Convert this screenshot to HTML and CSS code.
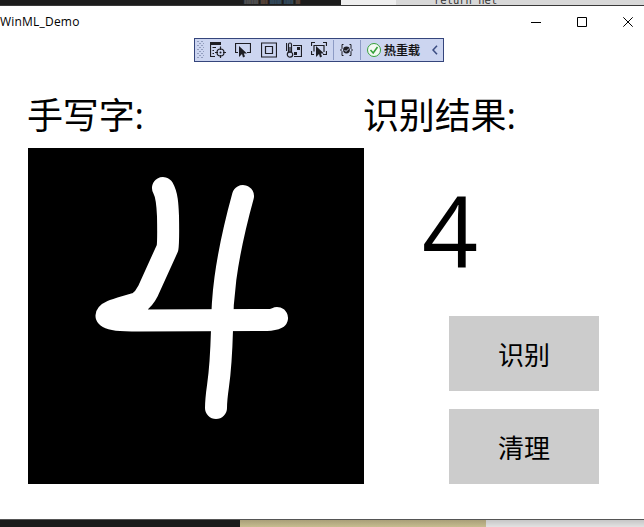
FILE: index.html
```html
<!DOCTYPE html>
<html lang="zh-CN">
<head>
<meta charset="utf-8">
<title>WinML_Demo</title>
<link rel="stylesheet" href="styles.css">
</head>
<body>
<div class="desktop">
  <div class="backdrop-top">
    <div class="back-dark"><span class="blur-code"><i>▒▒▒▒▒▒</i><b>▒▒▒</b><em>▒▒▒▒▒</em><em>▒▒▒▒</em><b>▒▒</b></span></div>
    <div class="back-light"><span class="back-text">return net</span></div>
  </div>
  <main class="window">
    <header class="titlebar">
      <span class="title">WinML_Demo</span>
      <div class="caption">
        <svg width="10" height="10" viewBox="0 0 10 10"><path d="M0 5.5H10"/></svg>
        <svg width="10" height="10" viewBox="0 0 10 10"><path d="M.5 .5H9.5V9.5H.5Z"/></svg>
        <svg width="10" height="10" viewBox="0 0 10 10"><path d="M.3 .3L9.7 9.7M9.7 .3L.3 9.7"/></svg>
      </div>
    </header>
    <div class="toolbar">
      <svg class="grip" width="7" height="18" viewBox="0 0 7 18"><path d="M0 .5H7M0 4.5H7M0 8.5H7M0 12.5H7M0 16.5H7" stroke-dasharray="2 2"/><path d="M2 2.5H7M2 6.5H7M2 10.5H7M2 14.5H7" stroke-dasharray="2 2"/></svg>
      <svg class="tool t1" width="16" height="16" viewBox="0 0 16 16"><path d="M0 1.5H11" stroke-width="3"/><path d="M.5 1V14.5H5M2.500 5.500H6M2.500 8.500H4M2.500 11.500H4M10.500 4.500V8M10.500 13V16M5 10.500H8M13 10.500H16"/><circle cx="10.500" cy="10.500" r="3.500"/><circle class="solid" cx="10.500" cy="10.500" r="1"/></svg>
      <svg class="tool t2" width="16" height="16" viewBox="0 0 16 16"><path d="M3 10.500H.5V1.500H15.500V10.500H12"/><path class="solid" d="M4 4V15L7 12L8 15.500L10 14.500L8.800 11.500H12Z"/></svg>
      <svg class="tool t3" width="16" height="16" viewBox="0 0 16 16"><path d="M.5 1H15.500V15H.5ZM4.500 4.500H11.500V11.500H4.500Z"/></svg>
      <svg class="tool t4" width="16" height="16" viewBox="0 0 16 16"><path d="M2.500 10V2.500Q2.500 1 4 1Q5.500 1 5.500 2.500V10M.5 1V9M7 3.500H15.500V14.500H8"/><path d="M4 5V11"/><circle cx="4" cy="12.500" r="2.700"/><path class="solid" d="M11 5H14V8H11ZM8 10H11V13H8Z"/></svg>
      <svg class="tool t5" width="16" height="16" viewBox="0 0 16 16"><path d="M.5 4V.5H4M12 .5H15.500V4M.5 9V12.500H3M12 12.500H15.500V9M3 9.500V3.500H13V10"/><path class="solid" d="M5 4V15L8 12L9 15.500L11 14.500L9.800 11.500H13Z"/></svg>
      <span class="divider d1"></span>
      <svg class="tool t6" width="13" height="12" viewBox="0 0 13 12"><path d="M3.500 .5H2V4.500L.5 6L2 7.500V11.500H3.500M9.500 .5H11V4.500L12.500 6L11 7.500V11.500H9.500"/><circle class="solid" cx="6.500" cy="6" r="3.400"/><path class="tick" d="M4.500 6L6 7.500L9 4.500"/></svg>
      <span class="divider d2"></span>
      <svg class="ok" width="14" height="14" viewBox="0 0 14 14"><circle cx="7" cy="7" r="6.500"/><path d="M3.500 7L6.200 10L10.500 4"/></svg>
      <span class="reload">热重载</span>
      <svg class="chev" width="6" height="10" viewBox="0 0 6 10"><path d="M5 .8L1 5L5 9.200"/></svg>
    </div>
    <div class="content">
      <section class="input">
        <h1>手写字:</h1>
        <svg class="ink" width="336" height="336" viewBox="28 148 336 336">
          <path d="M163 188C167 195 167.500 204 168 216Q168.500 242 167.500 248L148 291Q144 299 138 303C119 309 107 311 106.500 316C108 320 122 320.500 139 320.500L267 320Q273 320 277 318"/>
          <path d="M243 196C224 265 222 303 222 330Q221 365 218 386Q216 400 216 408"/>
        </svg>
      </section>
      <section class="output">
        <h1>识别结果:</h1>
        <div class="result">4</div>
        <div class="actions"><button>识别</button><button>清理</button></div>
      </section>
    </div>
  </main>
  <div class="backdrop-bottom"><div class="dark"></div><div class="sand"></div><div class="light"></div></div>
</div>
</body>
</html>
```
FILE: styles.css
```css
* { box-sizing: border-box; }
body { margin: 0; overflow: hidden; font-family: "Open Sans", "Noto Sans CJK SC", sans-serif; color: #000; }
.desktop { width: 644px; height: 527px; display: flex; flex-direction: column; }
svg { display: block; flex: none; fill: none; stroke: #1e1e24; }

.backdrop-top { display: flex; height: 5px; overflow: hidden; }
.back-dark { width: 341px; background: #1c1c1c; padding-left: 244px; overflow: hidden; }
.blur-code { display: flex; gap: 2px; font: 4px/4px "DejaVu Sans Mono", monospace; color: #777; white-space: nowrap; }
.blur-code i { font-style: normal; }
.blur-code b { font-weight: normal; color: #80604f; }
.blur-code em { font-style: normal; color: #456b88; }
.back-light { flex: 1; background: linear-gradient(90deg, #eee 0 55px, #d8d8d8 55px); padding-left: 93px; overflow: hidden; }
.back-text { display: block; margin-top: -6px; font: 10.5px/12px "DejaVu Sans Mono", monospace; color: #333; }

.window { height: 515px; background: #fff; border-top: 1px solid #393939; border-bottom: 1px solid #555; }
.titlebar { height: 32px; display: flex; justify-content: space-between; }
.title { font-size: 12px; line-height: 16px; margin-top: 8px; letter-spacing: 0.2px; }
.caption { display: flex; gap: 36px; padding: 11px 11px 0 0; }
.caption svg { stroke: #000; }

.toolbar { width: 250px; height: 24px; margin-left: 194px; display: flex; align-items: center; background: #ccd5f0; border: 1px solid #35457c; }
.grip { margin-left: 2px; stroke: #929dbd; }
.tool { stroke-width: 1.2; }
.t1 { margin-left: 6px; }
.t2 { margin-left: 9px; }
.t3 { margin-left: 10px; }
.t4 { margin-left: 9px; }
.t5 { margin-left: 9px; }
.solid { fill: #1e1e24; stroke: none; }
.tick { stroke: #ccd5f0; }
.divider { width: 1px; height: 20px; background: #8d9bc5; flex: none; }
.d1 { margin-left: 6px; }
.t6 { margin-left: 6px; stroke-width: 1; }
.d2 { margin-left: 7px; }
.ok { margin-left: 6px; }
.ok circle { fill: #f4faf3; stroke: #35a13a; }
.ok path { stroke: #35a13a; stroke-width: 1.6; }
.reload { margin-left: 3px; width: 37px; padding-bottom: 1px; font: 500 12px/18px "Noto Sans CJK SC", sans-serif; color: #111; -webkit-text-stroke: 0.2px #111; white-space: nowrap; }
.chev { margin-left: 11px; stroke: #3c4d82; stroke-width: 1.6; }

.content { display: flex; padding: 30px 0 0 28px; }
.input { width: 336px; }
.output { width: 252px; }
h1 { margin: 0 0 0 -1px; height: 56px; font-family: "Open Sans", "Noto Sans CJK SC", sans-serif; font-size: 36px; line-height: 48px; font-weight: 400; white-space: nowrap; letter-spacing: -0.15px; }
.ink { background: #000; }
.ink path { stroke: #fff; stroke-width: 22; stroke-linecap: round; stroke-linejoin: round; }
.result { height: 168px; padding-left: 58px; font: 98px/162px "Open Sans", sans-serif; }
.actions { display: flex; flex-direction: column; gap: 18px; padding-left: 85px; }
button { width: 150px; height: 75px; border: 0; padding: 0; background: #ccc; color: #000; font: 26px/36px "Noto Sans CJK SC", sans-serif; }

.backdrop-bottom { display: flex; height: 7px; }
.dark { width: 240px; background: #1b1b1b; }
.sand { width: 246px; background: linear-gradient(#a99f79, #c6bc8f); }
.light { flex: 1; background: linear-gradient(#c6c6c6, #e2e2e2); }
```
